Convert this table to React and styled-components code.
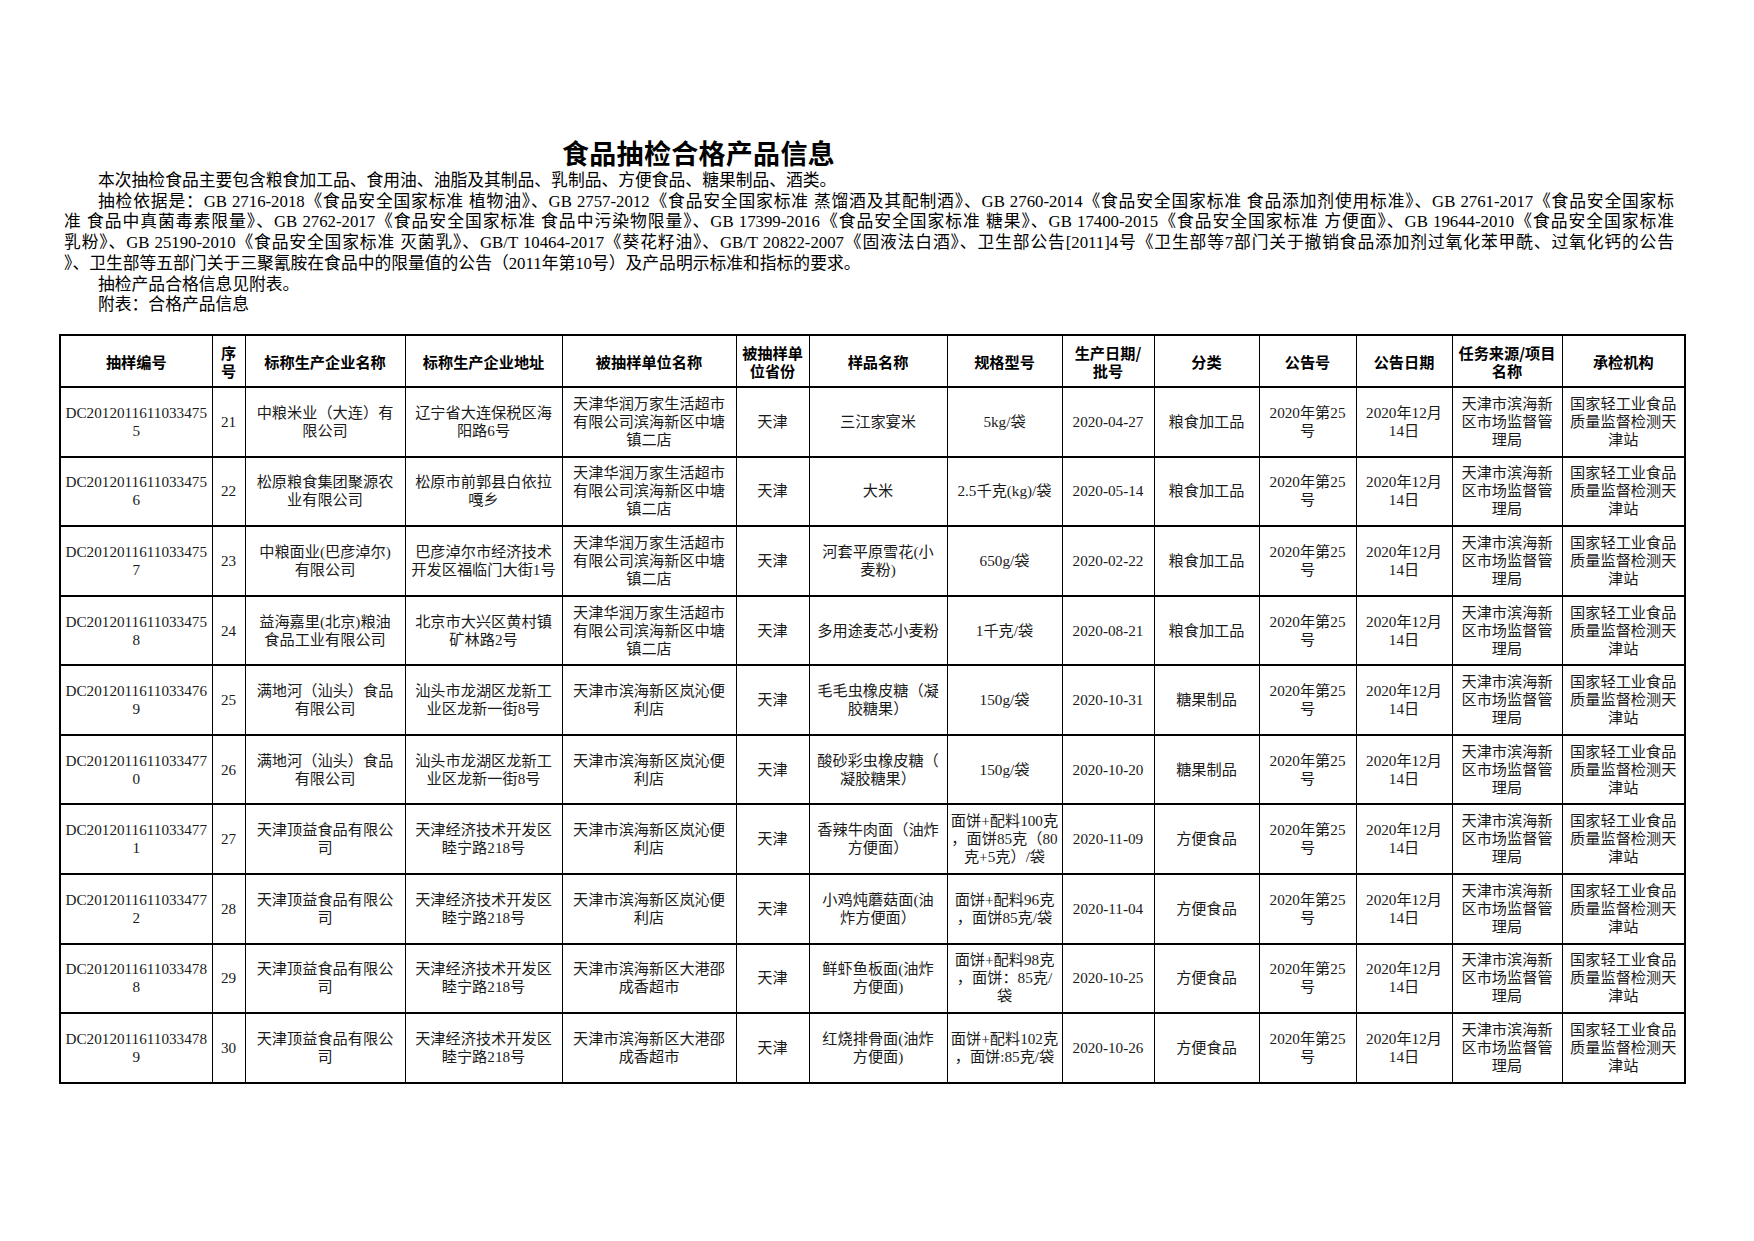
import styled, { createGlobalStyle } from 'styled-components'

const GlobalStyle = createGlobalStyle`
  html, body {
    margin: 0;
    padding: 0;
    background: #fff;
  }
  body {
    font-family: "Liberation Serif", "Noto Sans CJK SC", serif;
    color: #000;
  }
`

const Page = styled.div`
  width: 1754px;
  height: 1241px;
  padding-top: 137px;
  box-sizing: border-box;
`

const Title = styled.h1`
  margin: 0 0 0 562px;
  font-family: "Noto Sans CJK SC", sans-serif;
  font-weight: 700;
  font-size: 27px;
  line-height: 31px;
  letter-spacing: 0.3px;
`

const Intro = styled.div`
  margin: 3px 0 0 64px;
  width: 1610px;
  font-size: 16.8px;
  line-height: 20.7px;
`

const Line = styled.div`
  white-space: nowrap;
  padding-left: ${(p) => (p.$indent ? '34px' : '0')};
  text-align: left;
  text-align-last: ${(p) => (p.$full ? 'justify' : 'left')};
`

const Table = styled.table`
  margin: 18px 0 0 59px;
  border-collapse: collapse;
  table-layout: fixed;
  width: 1625px;
  border: 2px solid #000;
`

const HeadCell = styled.th`
  height: 50px;
  padding: 0 2px;
  border-left: 1px solid #000;
  border-right: 1px solid #000;
  font-family: "Noto Sans CJK SC", sans-serif;
  font-weight: 700;
  font-size: 15.2px;
  line-height: 18px;
  text-align: center;
  vertical-align: middle;
`

const Row = styled.tr`
  border-top: 2px solid #000;
`

const Cell = styled.td`
  height: 67.6px;
  padding: 0 1px;
  border-left: 1px solid #000;
  border-right: 1px solid #000;
  font-size: 15.2px;
  line-height: 18px;
  text-align: center;
  vertical-align: middle;
  white-space: nowrap;
  overflow: hidden;
  color: #1a1a1a;
`

const widths = [152, 33, 160, 157, 174, 73, 138, 115, 92, 105, 97, 96, 110, 123]

const headers = [
  ['抽样编号'],
  ['序', '号'],
  ['标称生产企业名称'],
  ['标称生产企业地址'],
  ['被抽样单位名称'],
  ['被抽样单', '位省份'],
  ['样品名称'],
  ['规格型号'],
  ['生产日期/', '批号'],
  ['分类'],
  ['公告号'],
  ['公告日期'],
  ['任务来源/项目', '名称'],
  ['承检机构'],
]

const hr = ['天津华润万家生活超市', '有限公司滨海新区中塘', '镇二店']
const lq = ['天津市滨海新区岚沁便', '利店']
const dg = ['天津市滨海新区大港邵', '成香超市']
const sw = ['汕头市龙湖区龙新工', '业区龙新一街8号']
const md = ['满地河（汕头）食品', '有限公司']
const dy = ['天津顶益食品有限公', '司']
const kf = ['天津经济技术开发区', '睦宁路218号']

const rows = [
  ['5', '475', '21', ['中粮米业（大连）有', '限公司'], ['辽宁省大连保税区海', '阳路6号'], hr, ['三江家宴米'], ['5kg/袋'], '2020-04-27', '粮食加工品'],
  ['6', '475', '22', ['松原粮食集团聚源农', '业有限公司'], ['松原市前郭县白依拉', '嘎乡'], hr, ['大米'], ['2.5千克(kg)/袋'], '2020-05-14', '粮食加工品'],
  ['7', '475', '23', ['中粮面业(巴彦淖尔)', '有限公司'], ['巴彦淖尔市经济技术', '开发区福临门大街1号'], hr, ['河套平原雪花(小', '麦粉)'], ['650g/袋'], '2020-02-22', '粮食加工品'],
  ['8', '475', '24', ['益海嘉里(北京)粮油', '食品工业有限公司'], ['北京市大兴区黄村镇', '矿林路2号'], hr, ['多用途麦芯小麦粉'], ['1千克/袋'], '2020-08-21', '粮食加工品'],
  ['9', '476', '25', md, sw, lq, ['毛毛虫橡皮糖（凝', '胶糖果）'], ['150g/袋'], '2020-10-31', '糖果制品'],
  ['0', '477', '26', md, sw, lq, ['酸砂彩虫橡皮糖（', '凝胶糖果）'], ['150g/袋'], '2020-10-20', '糖果制品'],
  ['1', '477', '27', dy, kf, lq, ['香辣牛肉面（油炸', '方便面）'], ['面饼+配料100克', '，面饼85克（80', '克+5克）/袋'], '2020-11-09', '方便食品'],
  ['2', '477', '28', dy, kf, lq, ['小鸡炖蘑菇面(油', '炸方便面）'], ['面饼+配料96克', '，面饼85克/袋'], '2020-11-04', '方便食品'],
  ['8', '478', '29', dy, kf, dg, ['鲜虾鱼板面(油炸', '方便面)'], ['面饼+配料98克', '，面饼：85克/', '袋'], '2020-10-25', '方便食品'],
  ['9', '478', '30', dy, kf, dg, ['红烧排骨面(油炸', '方便面)'], ['面饼+配料102克', '，面饼:85克/袋'], '2020-10-26', '方便食品'],
]

function Lines({ list }) {
  return list.map((t, i) => (
    <span key={i}>
      {i > 0 && <br />}
      {t}
    </span>
  ))
}

function App() {
  return (
    <Page>
      <GlobalStyle />
      <Title>食品抽检合格产品信息</Title>
      <Intro>
        <Line $indent>本次抽检食品主要包含粮食加工品、食用油、油脂及其制品、乳制品、方便食品、糖果制品、酒类。</Line>
        <Line $indent $full>抽检依据是：GB 2716-2018《食品安全国家标准 植物油》、GB 2757-2012《食品安全国家标准 蒸馏酒及其配制酒》、GB 2760-2014《食品安全国家标准 食品添加剂使用标准》、GB 2761-2017《食品安全国家标</Line>
        <Line $full>准 食品中真菌毒素限量》、GB 2762-2017《食品安全国家标准 食品中污染物限量》、GB 17399-2016《食品安全国家标准 糖果》、GB 17400-2015《食品安全国家标准 方便面》、GB 19644-2010《食品安全国家标准</Line>
        <Line $full>乳粉》、GB 25190-2010《食品安全国家标准 灭菌乳》、GB/T 10464-2017《葵花籽油》、GB/T 20822-2007《固液法白酒》、卫生部公告[2011]4号《卫生部等7部门关于撤销食品添加剂过氧化苯甲酰、过氧化钙的公告</Line>
        <Line>》、卫生部等五部门关于三聚氰胺在食品中的限量值的公告（2011年第10号）及产品明示标准和指标的要求。</Line>
        <Line $indent>抽检产品合格信息见附表。</Line>
        <Line $indent>附表：合格产品信息</Line>
      </Intro>
      <Table>
        <colgroup>
          {widths.map((w, i) => (
            <col key={i} style={{ width: w }} />
          ))}
        </colgroup>
        <thead>
          <tr>
            {headers.map((h, i) => (
              <HeadCell key={i}>
                <Lines list={h} />
              </HeadCell>
            ))}
          </tr>
        </thead>
        <tbody>
          {rows.map((r, i) => (
            <Row key={i}>
              <Cell>
                {`DC2012011611033${r[1]}`}
                <br />
                {r[0]}
              </Cell>
              <Cell>{r[2]}</Cell>
              <Cell><Lines list={r[3]} /></Cell>
              <Cell><Lines list={r[4]} /></Cell>
              <Cell><Lines list={r[5]} /></Cell>
              <Cell>天津</Cell>
              <Cell><Lines list={r[6]} /></Cell>
              <Cell><Lines list={r[7]} /></Cell>
              <Cell>{r[8]}</Cell>
              <Cell>{r[9]}</Cell>
              <Cell>2020年第25<br />号</Cell>
              <Cell>2020年12月<br />14日</Cell>
              <Cell>天津市滨海新<br />区市场监督管<br />理局</Cell>
              <Cell>国家轻工业食品<br />质量监督检测天<br />津站</Cell>
            </Row>
          ))}
        </tbody>
      </Table>
    </Page>
  )
}

export default App
